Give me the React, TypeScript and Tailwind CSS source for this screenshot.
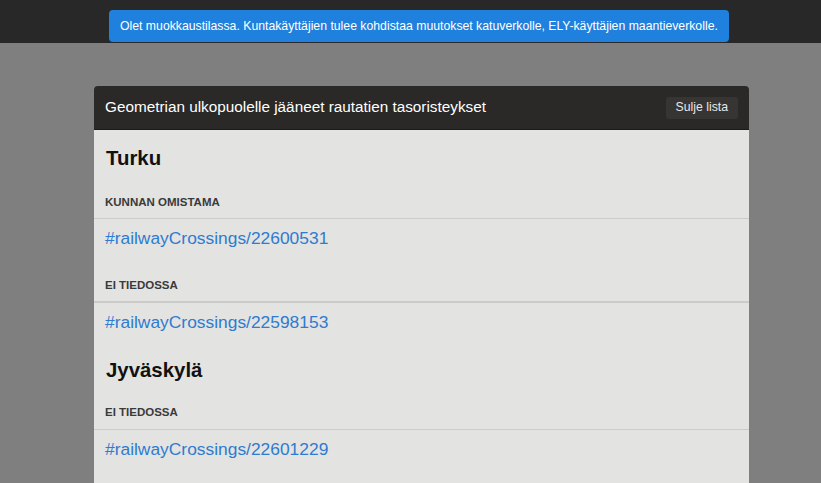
import React from 'react';

interface Crossing {
  label: string;
  ids: string[];
  thick?: boolean;
}

interface City {
  name: string;
  groups: Crossing[];
}

const cities: City[] = [
  {
    name: 'Turku',
    groups: [
      { label: 'Kunnan omistama', ids: ['22600531'] },
      { label: 'Ei tiedossa', ids: ['22598153'], thick: true },
    ],
  },
  {
    name: 'Jyväskylä',
    groups: [{ label: 'Ei tiedossa', ids: ['22601229'] }],
  },
];

const App: React.FC = () => {
  return (
    <div className="min-h-[483px] h-[483px] overflow-hidden bg-[#7f7f7f] font-['Liberation_Sans',Arial,sans-serif]">
      {/* top bar with edit-mode notice */}
      <div className="h-[43px] bg-[#282828] flex">
        <div className="ml-[109px] mt-[10px] h-[32px] flex items-center px-[11px] rounded-[4px] bg-[#1f80dd] text-white text-[12.25px] whitespace-nowrap">
          Olet muokkaustilassa. Kuntakäyttäjien tulee kohdistaa muutokset katuverkolle, ELY-käyttäjien maantieverkolle.
        </div>
      </div>

      <div className="ml-[94px] mt-[43px] w-[655px] rounded-t-[4px] overflow-hidden">
        <div className="h-[44px] bg-[#2a2927] flex items-center justify-between pl-[11px] pr-[11px] border-b border-[#1c1b1a]">
          <span className="text-white text-[15.3px]">Geometrian ulkopuolelle jääneet rautatien tasoristeykset</span>
          <button className="h-[22px] px-[10px] rounded-[3px] bg-[#363533] text-[#e8e8e8] text-[12.25px]">Sulje lista</button>
        </div>

        <div className="bg-[#e3e3e1] pt-[16px] pb-[30px]">
          {cities.map((city, ci) => (
            <div key={city.name} className={ci > 0 ? 'mt-[26px]' : ''}>
              <h2 className="px-[12px] text-[20.4px] leading-[24px] font-bold text-[#111]">{city.name}</h2>
              {city.groups.map((g, gi) => (
                <div key={gi} className={gi > 0 ? 'mt-[30px]' : ci > 0 ? 'mt-[23px]' : 'mt-[25px]'}>
                  <div
                    className={`px-[11px] ${ci > 0 ? 'pb-[10px]' : 'pb-[9px]'} text-[11.5px] leading-[14px] font-bold uppercase text-[#3a3a3a] ${
                      g.thick ? 'border-b-2 border-[#cbcbc9]' : 'border-b border-[#cbcbc9]'
                    }`}
                  >
                    {g.label}
                  </div>
                  {g.ids.map((id) => (
                    <div key={id} className="px-[11px] pt-[9px] text-[17.4px] leading-[20px]">
                      <a href={`#railwayCrossings/${id}`} className="text-[#2e7bd0]">
                        #railwayCrossings/{id}
                      </a>
                    </div>
                  ))}
                </div>
              ))}
            </div>
          ))}
        </div>
      </div>
    </div>
  );
};

export default App;
